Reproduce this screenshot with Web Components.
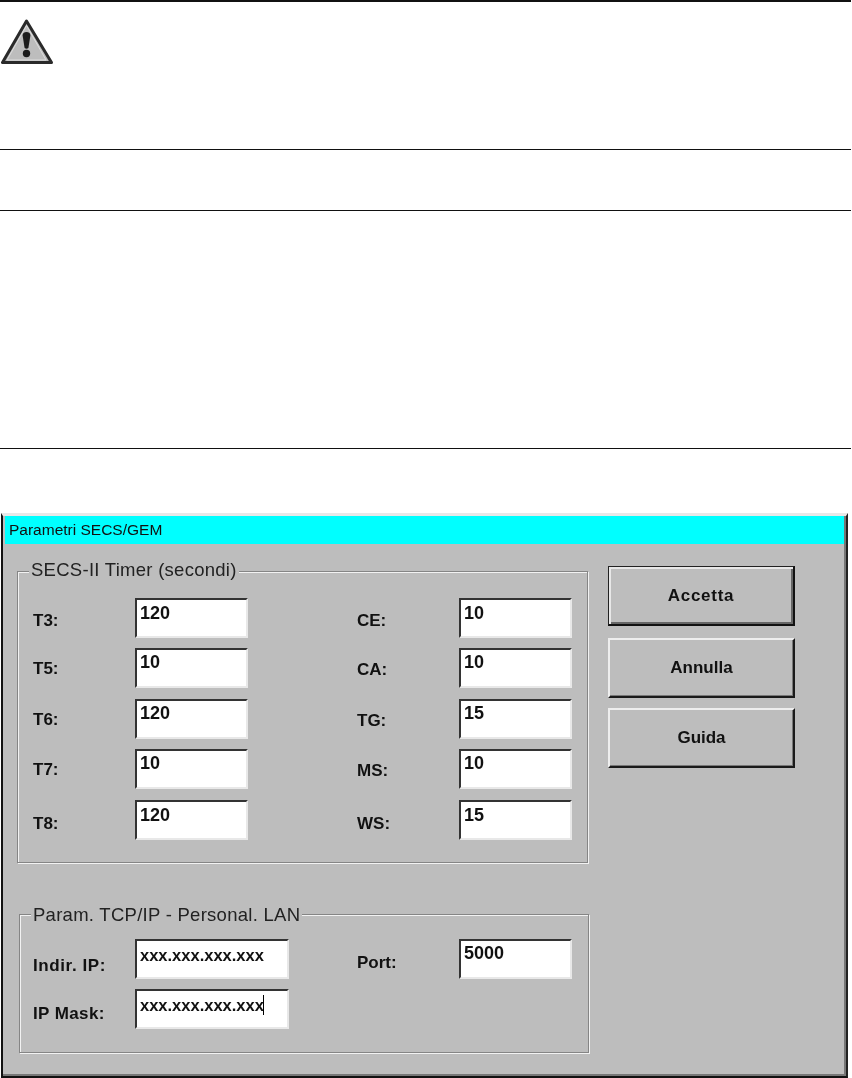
<!DOCTYPE html>
<html lang="it">
<head>
<meta charset="utf-8">
<title>Parametri SECS/GEM</title>
<style>
  html, body { margin: 0; background: #fff; }
  body { font-family: "Liberation Sans", Arial, sans-serif; width: 852px; height: 1078px; overflow: hidden; }
</style>
</head>
<body>
<doc-page>
  <doc-block style="--h: 149px; --rule: 2px">
    <warn-icon></warn-icon>
  </doc-block>
  <doc-block style="--h: 61px"></doc-block>
  <doc-block style="--h: 238px"></doc-block>
  <doc-block style="--h: 65px"></doc-block>

  <secs-dialog title-text="Parametri SECS/GEM">
    <secs-group slot="groups" legend="SECS-II Timer (secondi)">
      <secs-field label="T3:" value="120" style="--ly: 3px; --vy: 3px"></secs-field>
      <secs-field label="CE:" value="10" style="--ly: 3px; --vy: 3px"></secs-field>
      <secs-field label="T5:" value="10" style="--ly: 1px"></secs-field>
      <secs-field label="CA:" value="10" style="--ly: 2px"></secs-field>
      <secs-field label="T6:" value="120" style="--ly: 1px"></secs-field>
      <secs-field label="TG:" value="15" style="--ly: 2px"></secs-field>
      <secs-field label="T7:" value="10" style="--ly: 1px"></secs-field>
      <secs-field label="MS:" value="10" style="--ly: 2px"></secs-field>
      <secs-field label="T8:" value="120" style="--ly: 4px; --vy: 3px"></secs-field>
      <secs-field label="WS:" value="15" style="--ly: 4px; --vy: 3px"></secs-field>
    </secs-group>
    <secs-group slot="groups" class="lan" legend="Param. TCP/IP - Personal. LAN">
      <secs-field label="Indir. IP:" value="xxx.xxx.xxx.xxx" style="--iw: 154px; --ly: 7px; --ls: .6px; --vs: 16.5px; --vy: 4px"></secs-field>
      <secs-field label="Port:" value="5000" style="--ly: 4px"></secs-field>
      <secs-field label="IP Mask:" value="xxx.xxx.xxx.xxx" caret style="--iw: 154px; --ly: 5px; --ls: .4px; --vs: 16.5px; --vy: 4px"></secs-field>
    </secs-group>
    <secs-button slot="buttons" default>Accetta</secs-button>
    <secs-button slot="buttons">Annulla</secs-button>
    <secs-button slot="buttons">Guida</secs-button>
  </secs-dialog>
</doc-page>

<script>
class DocPage extends HTMLElement {
  constructor() {
    super();
    this.attachShadow({ mode: 'open' }).innerHTML = `
      <style>:host { display: flex; flex-direction: column; }</style>
      <slot></slot>`;
  }
}

class DocBlock extends HTMLElement {
  constructor() {
    super();
    this.attachShadow({ mode: 'open' }).innerHTML = `
      <style>
        :host {
          display: block;
          box-sizing: border-box;
          height: var(--h);
          width: 851px;
          border-top: var(--rule, 1px) solid #111;
        }
      </style>
      <slot></slot>`;
  }
}

class WarnIcon extends HTMLElement {
  constructor() {
    super();
    this.attachShadow({ mode: 'open' }).innerHTML = `
      <style>
        :host { display: block; width: 56px; height: 48px; margin: 17px 0 0 0; filter: blur(.4px); }
        svg { display: block; }
      </style>
      <svg width="56" height="48" viewBox="0 0 56 48">
        <path d="M26.5 2 L2.5 43.5 H51.5 Z" fill="#bdbdbd" stroke="#2a2a2a" stroke-width="3" stroke-linejoin="round"/>
        <path d="M26.5 6.5 L7 41 H46 Z" fill="none" stroke="#e4e4e4" stroke-width=".8"/>
        <path d="M22.6 16.5 Q22.6 13 26.5 13 Q30.4 13 30.4 16.5 L28.4 29 Q26.5 30.5 24.6 29 Z" fill="#1c1c1c"/>
        <circle cx="26.5" cy="34.5" r="3.7" fill="#1c1c1c"/>
      </svg>`;
  }
}

class SecsDialog extends HTMLElement {
  constructor() {
    super();
    this.attachShadow({ mode: 'open' }).innerHTML = `
      <style>
        :host {
          display: block;
          box-sizing: border-box;
          width: 847px;
          height: 565px;
          margin-left: 1px;
          background: #bdbdbd;
          border-top: 3px solid #e8e8e8;
          border-left: 2px solid #111;
          border-right: 2px solid #222;
          border-bottom: 2px solid #111;
          box-shadow: inset 0 -2px 0 #777, inset -2px 0 0 #777;
          padding: 0 2px;
          filter: blur(.3px);
        }
        .title {
          height: 28px;
          background: #00ffff;
          color: #111;
          font-size: 15.5px;
          line-height: 28px;
          padding-left: 4px;
        }
        .body {
          display: grid;
          grid-template-columns: 572px 187px;
          column-gap: 19px;
          padding: 22px 0 0 12px;
          align-items: start;
        }
        .groups { display: flex; flex-direction: column; gap: 51px; padding-top: 5px; }
        .buttons { display: flex; flex-direction: column; }
      </style>
      <div class="title"></div>
      <div class="body">
        <div class="groups"><slot name="groups"></slot></div>
        <div class="buttons"><slot name="buttons"></slot></div>
      </div>`;
  }
  connectedCallback() {
    this.shadowRoot.querySelector('.title').textContent = this.getAttribute('title-text');
  }
}

class SecsGroup extends HTMLElement {
  constructor() {
    super();
    this.attachShadow({ mode: 'open' }).innerHTML = `
      <style>
        :host {
          display: block;
          position: relative;
          box-sizing: border-box;
          width: 571px;
          height: 292px;
          padding: 25.9px 0 0 15px;
          border: 1px solid #858585;
          box-shadow: 1px 1px 0 #f2f2f2, inset 1px 1px 0 #f2f2f2;
        }
        :host(.lan) {
          width: 570px;
          height: 139px;
          margin-left: 2px;
          padding: 24px 0 0 13px;
        }
        .legend {
          position: absolute;
          left: 11px;
          top: -12px;
          padding: 0 2px;
          background: #bdbdbd;
          font-size: 18.5px;
          line-height: 20px;
          letter-spacing: .27px;
          color: #222;
        }
        :host(.lan) .legend { top: -10px; }
        .grid {
          display: grid;
          grid-template-columns: 215px 215px;
          column-gap: 109px;
          row-gap: 10.5px;
        }
        :host(.lan) .grid { row-gap: 10px; }
      </style>
      <div class="legend"></div>
      <div class="grid"><slot></slot></div>`;
  }
  connectedCallback() {
    this.shadowRoot.querySelector('.legend').textContent = this.getAttribute('legend');
  }
}

class SecsField extends HTMLElement {
  constructor() {
    super();
    this.attachShadow({ mode: 'open' }).innerHTML = `
      <style>
        :host {
          display: flex;
          align-items: center;
          height: 40px;
          font-size: 17px;
          font-weight: bold;
          color: #111;
        }
        .label {
          flex: 0 0 102px;
          padding-top: calc(var(--ly, 1px) * 2);
          letter-spacing: var(--ls, 0);
        }
        .input {
          flex: 0 0 auto;
          box-sizing: border-box;
          width: var(--iw, 113px);
          height: 40px;
          padding: var(--vy, 2px) 0 0 3px;
          line-height: 20px;
          font-size: var(--vs, 18px);
          background: #fff;
          border-style: solid;
          border-width: 2px;
          border-color: #333 #e8e8e8 #e8e8e8 #333;
        }
        .value { display: inline-block; height: 20px; vertical-align: top; }
        .caret { display: inline-block; width: 1px; height: 20px; background: #000; vertical-align: top; margin-left: -1px; }
      </style>
      <span class="label"></span>
      <div class="input"><span class="value"></span></div>`;
  }
  connectedCallback() {
    this.shadowRoot.querySelector('.label').textContent = this.getAttribute('label');
    const v = this.shadowRoot.querySelector('.value');
    v.textContent = this.getAttribute('value');
    if (this.hasAttribute('caret')) {
      const c = document.createElement('span');
      c.className = 'caret';
      v.after(c);
    }
  }
}

class SecsButton extends HTMLElement {
  constructor() {
    super();
    this.attachShadow({ mode: 'open' }).innerHTML = `
      <style>
        :host {
          display: flex;
          align-items: center;
          justify-content: center;
          box-sizing: border-box;
          width: 187px;
          height: 60px;
          margin-bottom: 10px;
          background: #bdbdbd;
          color: #111;
          font-size: 17px;
          font-weight: bold;
          border-style: solid;
          border-width: 2px;
          border-color: #eee #1a1a1a #1a1a1a #eee;
          box-shadow: inset -1px -1px 0 #777;
        }
        :host([default]) {
          margin-bottom: 12px;
          letter-spacing: .7px;
          border-width: 1px 2px 2px 1px;
          border-color: #222 #111 #111 #222;
          box-shadow: inset 2px 2px 0 #e8e8e8, inset -2px -2px 0 #666;
        }
      </style>
      <slot></slot>`;
  }
}

customElements.define('doc-page', DocPage);
customElements.define('doc-block', DocBlock);
customElements.define('warn-icon', WarnIcon);
customElements.define('secs-dialog', SecsDialog);
customElements.define('secs-group', SecsGroup);
customElements.define('secs-field', SecsField);
customElements.define('secs-button', SecsButton);
</script>
</body>
</html>
